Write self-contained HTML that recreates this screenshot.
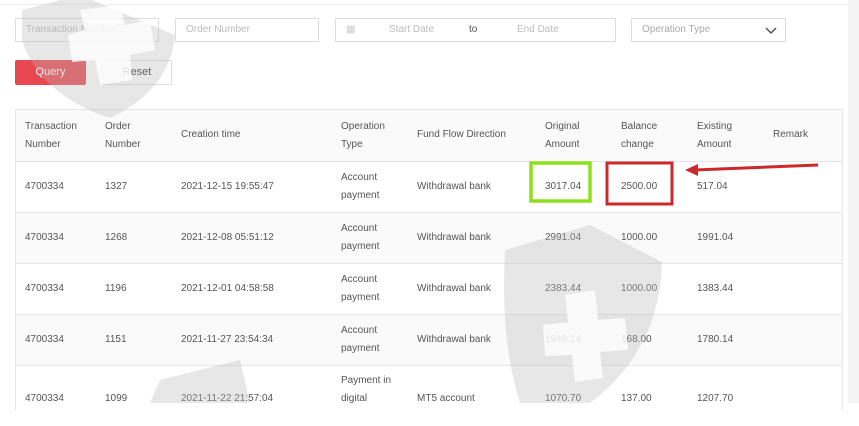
<!DOCTYPE html>
<html><head><style>
body{margin:0;width:859px;height:403px;overflow:hidden;background:#fff;font-family:"Liberation Sans",sans-serif;font-size:10px;color:#555;position:relative}
.a{position:absolute}
.in{position:absolute;border:1px solid #dcdcdc;height:24px;top:18px;box-sizing:border-box;color:#bbb;line-height:22px;padding-left:10px;background:#fff}
.tbl{position:absolute;left:15px;top:109px;width:826px;height:300px;border:1px solid #e6e6e6;border-bottom:none}
.row{position:absolute;left:0;width:826px;border-top:1px solid #e6e6e6}
.c{position:absolute;line-height:18px}
</style></head><body>
<div class="a" style="left:0;top:4px;width:859px;border-top:1px solid #eee"></div>
<div class="in" style="left:15px;width:144px">Transaction Number</div>
<div class="in" style="left:175px;width:144px">Order Number</div>
<div class="in" style="left:335px;width:281px"><span style="color:#ccc">▦</span><span style="position:absolute;left:53px">Start Date</span><span style="position:absolute;left:133px;color:#555">to</span><span style="position:absolute;left:181px">End Date</span></div>
<div class="in" style="left:631px;width:155px;color:#aaa">Operation Type<svg class="a" style="right:8px;top:8px" width="12" height="8"><path d="M1 1l5 5 5-5" stroke="#555" stroke-width="1.5" fill="none"/></svg></div>
<div class="a" style="left:15px;top:60px;width:71px;height:25px;background:#e8474f;color:#fff;text-align:center;line-height:25px;font-size:11px;border-radius:2px">Query</div>
<div class="a" style="left:102px;top:60px;width:70px;height:25px;border:1px solid #ddd;box-sizing:border-box;text-align:center;line-height:23px;font-size:11px;color:#333">Reset</div>
<div class="a" style="left:848px;top:0;width:11px;height:403px;background:#f4f4f4"></div>
<div class="tbl">
<div class="row" style="top:0;height:51px;background:#fafafa;border-top:none">
<div class="c" style="left:9px;top:8px">Transaction<br>Number</div><div class="c" style="left:89px;top:8px">Order<br>Number</div><div class="c" style="left:165px;top:16px">Creation time</div><div class="c" style="left:325px;top:8px">Operation<br>Type</div><div class="c" style="left:401px;top:16px">Fund Flow Direction</div><div class="c" style="left:529px;top:8px">Original<br>Amount</div><div class="c" style="left:605px;top:8px">Balance<br>change</div><div class="c" style="left:681px;top:8px">Existing<br>Amount</div><div class="c" style="left:757px;top:16px">Remark</div></div>
<div class="row" style="top:51px;height:51px"><div class="c" style="left:9px;top:16px">4700334</div><div class="c" style="left:89px;top:16px">1327</div><div class="c" style="left:165px;top:16px">2021-12-15 19:55:47</div><div class="c" style="left:325px;top:7px">Account<br>payment</div><div class="c" style="left:401px;top:16px">Withdrawal bank</div><div class="c" style="left:529px;top:16px">3017.04</div><div class="c" style="left:605px;top:16px">2500.00</div><div class="c" style="left:681px;top:16px">517.04</div></div>
<div class="row" style="top:102px;height:51px;background:#fafafa"><div class="c" style="left:9px;top:16px">4700334</div><div class="c" style="left:89px;top:16px">1268</div><div class="c" style="left:165px;top:16px">2021-12-08 05:51:12</div><div class="c" style="left:325px;top:7px">Account<br>payment</div><div class="c" style="left:401px;top:16px">Withdrawal bank</div><div class="c" style="left:529px;top:16px">2991.04</div><div class="c" style="left:605px;top:16px">1000.00</div><div class="c" style="left:681px;top:16px">1991.04</div></div>
<div class="row" style="top:153px;height:51px"><div class="c" style="left:9px;top:16px">4700334</div><div class="c" style="left:89px;top:16px">1196</div><div class="c" style="left:165px;top:16px">2021-12-01 04:58:58</div><div class="c" style="left:325px;top:7px">Account<br>payment</div><div class="c" style="left:401px;top:16px">Withdrawal bank</div><div class="c" style="left:529px;top:16px">2383.44</div><div class="c" style="left:605px;top:16px">1000.00</div><div class="c" style="left:681px;top:16px">1383.44</div></div>
<div class="row" style="top:204px;height:51px;background:#fafafa"><div class="c" style="left:9px;top:16px">4700334</div><div class="c" style="left:89px;top:16px">1151</div><div class="c" style="left:165px;top:16px">2021-11-27 23:54:34</div><div class="c" style="left:325px;top:7px">Account<br>payment</div><div class="c" style="left:401px;top:16px">Withdrawal bank</div><div class="c" style="left:529px;top:16px">1948.14</div><div class="c" style="left:605px;top:16px">168.00</div><div class="c" style="left:681px;top:16px">1780.14</div></div>
<div class="row" style="top:255px;height:60px"><div class="c" style="left:9px;top:24px">4700334</div><div class="c" style="left:89px;top:24px">1099</div><div class="c" style="left:165px;top:24px">2021-11-22 21:57:04</div><div class="c" style="left:325px;top:6px">Payment in<br>digital</div><div class="c" style="left:401px;top:24px">MT5 account</div><div class="c" style="left:529px;top:24px">1070.70</div><div class="c" style="left:605px;top:24px">137.00</div><div class="c" style="left:681px;top:24px">1207.70</div></div>
</div>
<svg class="a" style="left:0;top:0" width="859" height="403">
<g fill="#bbb" opacity="0.35">
<path d="M22 10 L80 -5 L175 35 Q170 90 110 118 Q40 95 22 40 Z"/>
<path d="M505 250 L590 225 L662 262 Q660 350 590 403 L520 403 Q500 340 505 250 Z"/>
<path d="M160 380 L240 360 L250 403 L150 403 Z"/>
</g>
<g fill="#fff" opacity="0.8">
<path d="M80 10 L120 5 L125 25 L150 20 L155 50 L130 55 L132 80 L100 85 L95 60 L72 62 L68 35 L85 30 Z"/>
<path d="M565 295 L595 290 L598 320 L625 318 L628 350 L600 352 L603 378 L575 382 L572 355 L545 356 L543 325 L568 322 Z"/>
</g>
<rect x="531" y="163" width="59" height="38" fill="none" stroke="#8fe01c" stroke-width="3.5"/>
<rect x="607" y="163" width="65" height="41" fill="none" stroke="#cc2a2a" stroke-width="3"/>
<path d="M818 165 L695 170" stroke="#cc2a2a" stroke-width="3"/>
<path d="M685 170 L698 164 L698 176 Z" fill="#cc2a2a"/>
</svg>
</body></html>
